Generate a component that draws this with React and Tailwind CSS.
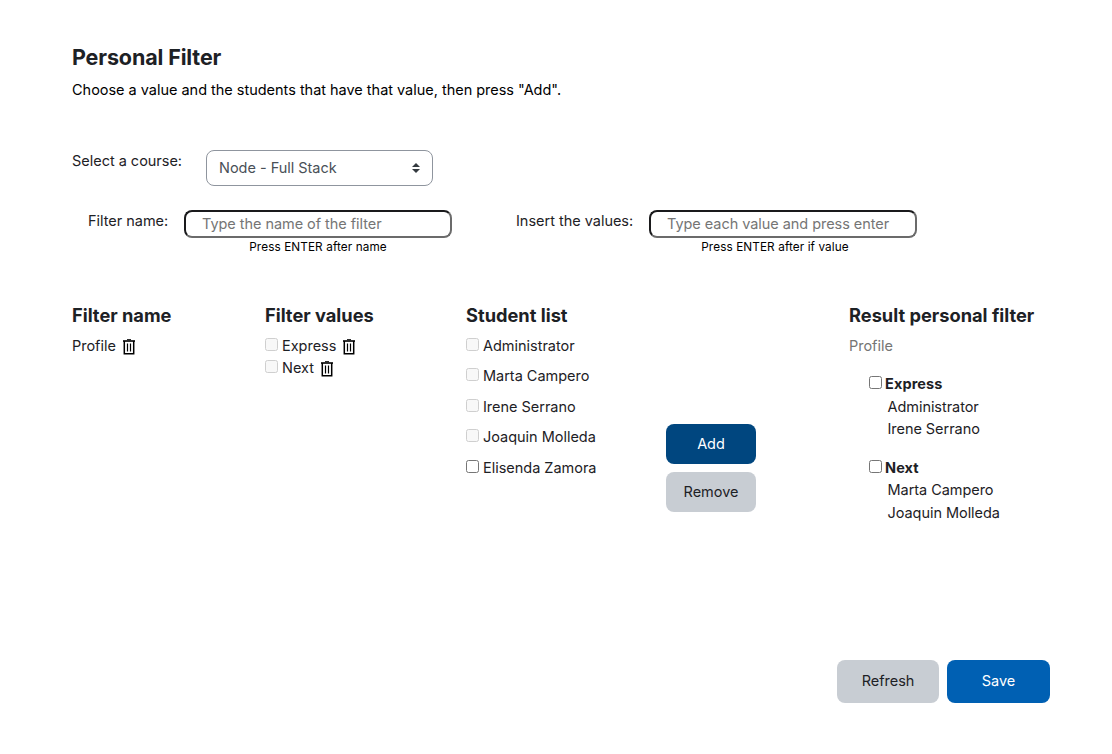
import React from "react";

function Check({ disabled, className = "" }) {
  return (
    <span
      className={
        "inline-block size-[13px] shrink-0 rounded-[2.5px] border " +
        (disabled ? "border-[#cfcfcf] bg-[#f8f8f8] " : "border-[#767676] bg-white ") +
        className
      }
    />
  );
}

function Trash({ className = "" }) {
  return (
    <svg className={"h-4 w-3 shrink-0 " + className} viewBox="0 0 12 16" fill="none" stroke="#000">
      <path d="M4 .7h4" strokeWidth="1" />
      <path d="M0 2h12" strokeWidth="1.6" />
      <path d="M1.3 2v12.8h9.4V2" strokeWidth="1.5" />
      <path d="M4.5 4.5v8M7.5 4.5v8" strokeWidth="1.2" />
    </svg>
  );
}

function Heading({ children }) {
  return <h2 className="h-[22px] text-[18.25px] font-bold leading-[20px] tracking-normal whitespace-nowrap">{children}</h2>;
}

const students = [
  ["Administrator", true, "h-[30px]"],
  ["Marta Campero", true, "h-[31px]"],
  ["Irene Serrano", true, "h-[30px]"],
  ["Joaquin Molleda", true, "h-[31px]"],
  ["Elisenda Zamora", false, "h-[30px]"],
];

function Field({ label, labelClass, placeholder, hint, hintClass }) {
  return (
    <div className="flex">
      <label className={"leading-[22px] whitespace-nowrap " + labelClass}>{label}</label>
      <div className="w-[268px]">
        <input
          placeholder={placeholder}
          className="block h-7 w-[268px] rounded-lg border-2 border-t-[#1a1a1c] border-l-[#1a1a1c] border-r-[#6b6b6b] border-b-[#6b6b6b] px-4 pb-px tracking-[-0.05px] placeholder:text-[#757575]"
        />
        <p className={"text-center text-[11.75px] leading-[18px] tracking-[0.1px] text-black " + hintClass}>{hint}</p>
      </div>
    </div>
  );
}

function Result({ title, names, className, titleHeight, firstHeight }) {
  return (
    <div className={"pl-5 " + className}>
      <div className={"flex " + titleHeight}>
        <Check className="mt-[3px]" />
        <span className="ml-[3px] font-bold leading-[22px] tracking-[0.1px]">{title}</span>
      </div>
      {names.map((n, i) => (
        <p key={n} className={"pl-[18.5px] leading-[22px] tracking-[-0.05px] " + (i === 0 ? firstHeight : "h-[22px]")}>{n}</p>
      ))}
    </div>
  );
}

export default function App() {
  return (
    <main className="h-[754px] w-[1112px] overflow-hidden bg-white pl-[72px] pt-[44px] font-['Inter',sans-serif] text-[14.5px] tracking-[-0.02px] text-[#1d2125]">
      <h1 className="h-[27px] text-[21.5px] font-bold leading-[27px] tracking-[-0.13px]">Personal Filter</h1>
      <p className="mt-2 h-[22px] leading-[22px] text-black">Choose a value and the students that have that value, then press "Add".</p>

      <div className="mt-[49px] flex h-9">
        <label className="w-[134px] leading-[22px]">Select a course:</label>
        <div className="flex h-9 w-[227px] items-center justify-between rounded-lg border border-[#8f959e] pl-3 pr-3 text-[#495057]">
          <span>Node - Full Stack</span>
          <svg className="h-[10px] w-2" viewBox="0 0 8 10" fill="#343a40">
            <path d="M4 0 0 4h8zM4 10 0 6h8z" />
          </svg>
        </div>
      </div>

      <div className="mt-6 flex h-[46px] pl-4">
        <Field label="Filter name:" labelClass="w-24" placeholder="Type the name of the filter" hint="Press ENTER after name" hintClass="" />
        <div className="w-16" />
        <Field label="Insert the values:" labelClass="w-[133px]" placeholder="Type each value and press enter" hint="Press ENTER after if value" hintClass="pr-4" />
      </div>

      <div className="mt-[49px] flex h-[240px]">
        <section className="w-[193px]">
          <Heading>Filter name</Heading>
          <div className="mt-2 flex h-[22px] leading-[22px]">
            Profile <Trash className="ml-[7px] mt-[4px]" />
          </div>
        </section>
        <section className="w-[201px]">
          <Heading>Filter values</Heading>
          <div className="mt-2 flex h-[22px] leading-[22px]">
            <Check disabled className="mt-[3px]" />
            <span className="ml-1">Express</span>
            <Trash className="ml-[7px] mt-[4px]" />
          </div>
          <div className="flex h-[22px] leading-[22px]">
            <Check disabled className="mt-[3px]" />
            <span className="ml-1">Next</span>
            <Trash className="ml-[7px] mt-[4px]" />
          </div>
        </section>
        <section className="w-[200px]">
          <Heading>Student list</Heading>
          <div className="mt-2">
            {students.map(([name, disabled, h]) => (
              <div key={name} className={"flex leading-[22px] " + h}>
                <Check disabled={disabled} className="mt-[3px]" />
                <span className="ml-1">{name}</span>
              </div>
            ))}
          </div>
        </section>
        <div className="flex w-[183px] flex-col gap-2 pt-[119px]">
          <button className="h-10 w-[90px] rounded-lg bg-[#00467f] text-white">Add</button>
          <button className="h-10 w-[90px] rounded-lg bg-[#c8cdd3]">Remove</button>
        </div>
        <section>
          <Heading>Result personal filter</Heading>
          <p className="mt-2 h-[22px] leading-[22px] text-[#757575]">Profile</p>
          <Result title="Express" names={["Administrator", "Irene Serrano"]} className="mt-4" titleHeight="h-[23px]" firstHeight="h-[22px]" />
          <Result title="Next" names={["Marta Campero", "Joaquin Molleda"]} className="mt-[17px]" titleHeight="h-[22px]" firstHeight="h-[23px]" />
        </section>
      </div>

      <div className="mt-[115px] flex gap-2 pl-[765px]">
        <button className="h-[43px] w-[102px] rounded-lg bg-[#c8cdd3] pb-0.5">Refresh</button>
        <button className="h-[43px] w-[103px] rounded-lg bg-[#0060b3] pb-0.5 text-white">Save</button>
      </div>
    </main>
  );
}
